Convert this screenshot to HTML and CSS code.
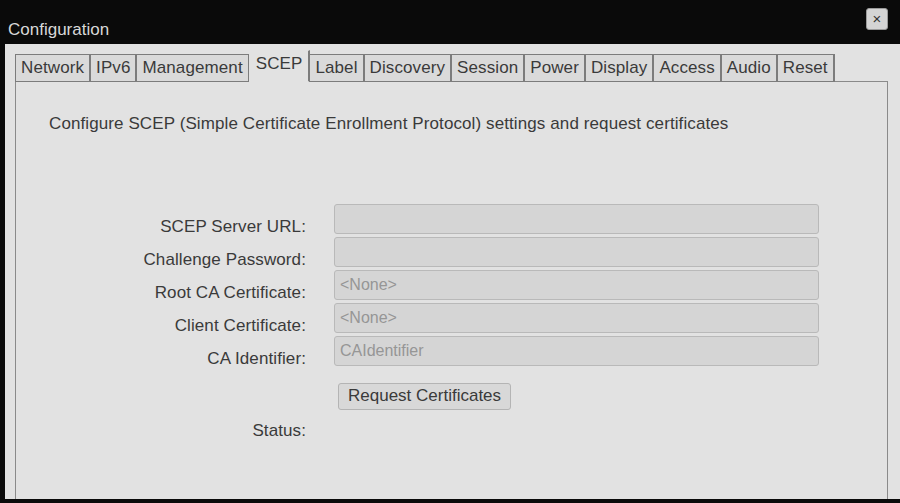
FILE: index.html
```html
<!DOCTYPE html>
<html lang="en">

<head>
    <meta charset="UTF-8">
    <meta name="viewport" content="width=device-width, initial-scale=1.0">
    <title>Configuration</title>
    <link rel="stylesheet" href="styles.css">
</head>

<body>
    <div class="window">
        <div class="titlebar">
            <span class="title">Configuration</span>
            <button class="close">&times;</button>
        </div>
        <div class="content">
            <div class="tabs">
                <div class="tab">Network</div>
                <div class="tab">IPv6</div>
                <div class="tab">Management</div>
                <div class="tab active">SCEP</div>
                <div class="tab">Label</div>
                <div class="tab">Discovery</div>
                <div class="tab">Session</div>
                <div class="tab">Power</div>
                <div class="tab">Display</div>
                <div class="tab">Access</div>
                <div class="tab">Audio</div>
                <div class="tab">Reset</div>
            </div>
            <div class="panel">
                <p class="intro">Configure SCEP (Simple Certificate Enrollment Protocol) settings and request certificates</p>
                <div class="form">
                    <label>SCEP Server URL:</label>
                    <div class="field"></div>
                    <label>Challenge Password:</label>
                    <div class="field"></div>
                    <label>Root CA Certificate:</label>
                    <div class="field">&lt;None&gt;</div>
                    <label>Client Certificate:</label>
                    <div class="field">&lt;None&gt;</div>
                    <label>CA Identifier:</label>
                    <div class="field">CAIdentifier</div>
                    <span></span>
                    <div class="actions"><button class="request">Request Certificates</button></div>
                    <label class="status">Status:</label>
                    <span></span>
                </div>
            </div>
        </div>
    </div>
</body>

</html>
```

FILE: styles.css
```css
body {
    margin: 0;
    background: #0a0a0a;
    font-family: "Liberation Sans", Arial, sans-serif;
    color: #3a3a3a;
}

.window {
    height: 503px;
    display: flex;
    flex-direction: column;
    padding-top: 8px;
    box-sizing: border-box;
}

.titlebar {
    display: flex;
    justify-content: space-between;
    align-items: flex-start;
    height: 36px;
    padding: 0 12px 0 8px;
}

.title {
    color: #d8d8d8;
    font-size: 17px;
    margin-top: 12px;
}

.close {
    width: 22px;
    height: 22px;
    padding: 0;
    background: #d4d4d4;
    border: 1px solid #9a9a9a;
    border-radius: 3px;
    color: #333;
    font-size: 15px;
    line-height: 18px;
}

.content {
    flex: 1;
    margin: 0 0 4px 5px;
    background: #e2e2e2;
    padding: 6px 12px 0 10px;
    display: flex;
    flex-direction: column;
}

.tabs {
    display: flex;
    align-items: flex-end;
    position: relative;
    z-index: 1;
}

.tab {
    font-size: 17px;
    letter-spacing: 0.1px;
    padding: 3px 5px 3px 5px;
    border: 1px solid #7c7c7c;
    border-right-width: 2px;
    background: #dadada;
    margin-right: -1px;
}

.tab.active {
    background: #e2e2e2;
    border-color: #e2e2e2;
    border-right-color: #7c7c7c;
    padding: 3px 6px 7px 6px;
}

.panel {
    flex: 1;
    border: 1px solid #8a8a8a;
    border-bottom: none;
    margin-top: -1px;
    background: #e2e2e2;
}

.intro {
    margin: 32px 0 0 33px;
    font-size: 17px;
    letter-spacing: 0.1px;
}

.form {
    display: grid;
    grid-template-columns: 290px 485px;
    column-gap: 28px;
    row-gap: 3px;
    margin-top: 70px;
}

.form label {
    text-align: right;
    font-size: 17px;
    letter-spacing: 0.1px;
    line-height: 20px;
    align-self: end;
    margin-bottom: -3px;
}

.field {
    height: 30px;
    box-sizing: border-box;
    background: #d5d5d5;
    border: 1px solid #b9b9b9;
    border-radius: 3px;
    font-size: 16px;
    color: #969696;
    padding: 5px 5px;
}

.actions {
    padding: 14px 0 0 4px;
}

.request {
    font-family: inherit;
    font-size: 17px;
    color: #3a3a3a;
    background: #d8d8d8;
    border: 1px solid #b4b4b4;
    border-radius: 3px;
    padding: 2px 9px 3px;
}

.form .status {
    align-self: start;
    margin: 8px 0 0;
}
```
